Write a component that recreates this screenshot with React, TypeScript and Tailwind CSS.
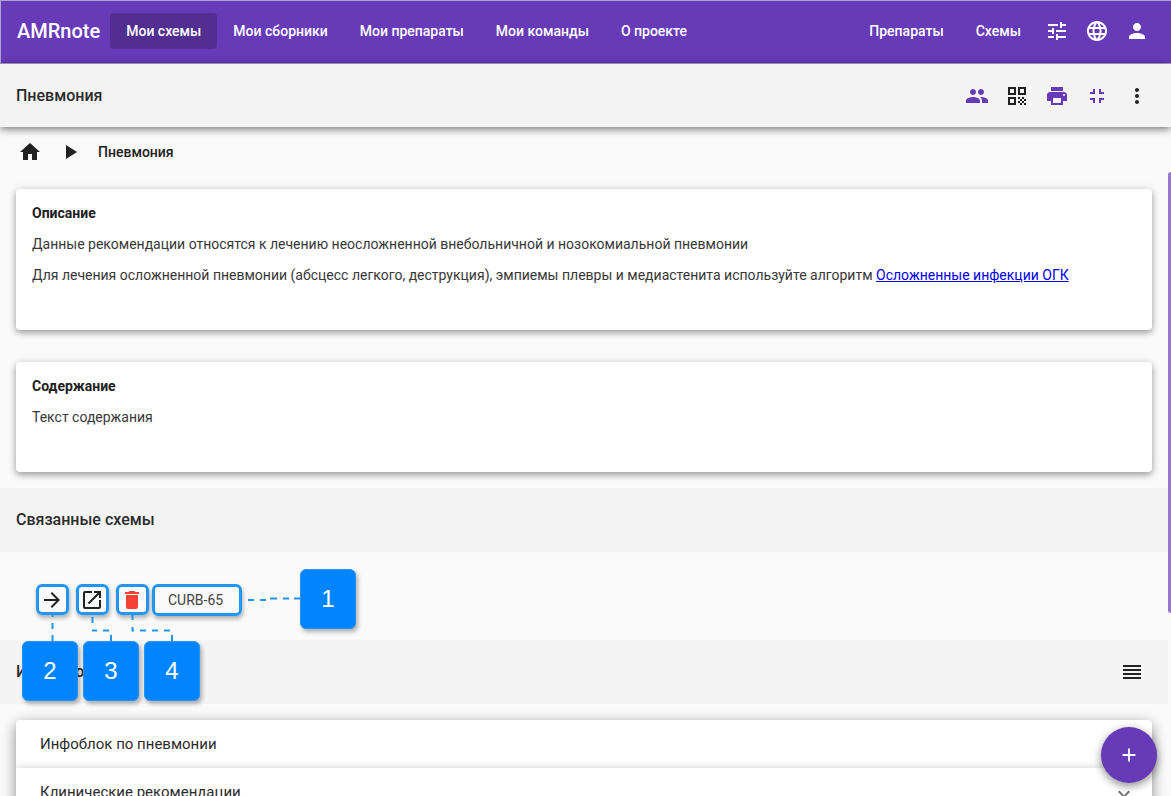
import type { ReactNode } from "react";
import {
  MdAdd,
  MdArrowForward,
  MdDelete,
  MdExpandMore,
  MdFullscreenExit,
  MdHome,
  MdLanguage,
  MdMoreVert,
  MdOpenInNew,
  MdPeople,
  MdPerson,
  MdPlayArrow,
  MdPrint,
  MdQrCode,
  MdReorder,
  MdTune,
} from "react-icons/md";

function IconButton({ label, className = "", children }: { label: string; className?: string; children: ReactNode }) {
  return (
    <button type="button" aria-label={label} className={`flex size-10 shrink-0 items-center justify-center rounded-full ${className}`}>
      {children}
    </button>
  );
}

function NavLink({ active = false, children }: { active?: boolean; children: ReactNode }) {
  return (
    <a
      href="#"
      className={`flex h-9 items-center rounded px-4 text-sm font-medium whitespace-nowrap ${active ? "bg-[#522e91]" : ""}`}
    >
      {children}
    </a>
  );
}

function Card({ title, children }: { title: string; children: ReactNode }) {
  return (
    <section className="mx-4 flex flex-col gap-[11px] rounded bg-white px-4 pt-[14px] pb-[45px] text-sm leading-5 text-[#383838] shadow-[0_3px_6px_rgba(0,0,0,0.3),0_1px_10px_rgba(0,0,0,0.14)]">
      <h2 className="font-bold text-[#212121]">{title}</h2>
      {children}
    </section>
  );
}

function SectionBar({ title, children }: { title: string; children?: ReactNode }) {
  return (
    <div className="flex h-16 shrink-0 items-center justify-between bg-[#f4f4f4] px-4">
      <h2 className="text-base font-medium">{title}</h2>
      {children}
    </div>
  );
}

const frame = "absolute rounded-md border-3 border-[#2196f3] shadow-[1px_3px_4px_rgba(0,0,0,0.3)]";
const marker =
  "absolute flex h-15 w-14 items-center justify-center rounded-md border border-[#2b93f7] bg-[#0084ff] text-2xl text-white shadow-[2px_3px_4px_rgba(0,0,0,0.3)]";

function Callouts() {
  return (
    <div className="pointer-events-none absolute inset-0 font-['Liberation_Sans',sans-serif]">
      <div className={`${frame} top-[584px] left-[36px] h-[31px] w-[33px]`} />
      <div className={`${frame} top-[584px] left-[76px] h-[31px] w-[33px]`} />
      <div className={`${frame} top-[584px] left-[116px] h-[31px] w-[33px]`} />
      <div className={`${frame} top-[584px] left-[152px] h-8 w-[90px]`} />
      <svg className="absolute top-[584px] left-0" width="320" height="60" fill="none" stroke="#2196f3" strokeWidth="2" aria-hidden="true">
        <path d="M248 16H254M260 16H266M270 14.500H277M283 14.500H289M294 14.500H300" />
        <path d="M52.500 31V33M52.500 39V45M52.500 51V57" />
        <path d="M92.500 33V39M92 46.500H97M103 46.500H109M111 51V57" />
        <path d="M132.500 31V36M132.500 43V46.500H134M140 46.500H146M152 46.500H158M164 46.500H170M172 51V57" />
      </svg>
      <div className={`${marker} top-[569px] left-[300px]`}>1</div>
      <div className={`${marker} top-[641px] left-[22px]`}>2</div>
      <div className={`${marker} top-[641px] left-[83px]`}>3</div>
      <div className={`${marker} top-[641px] left-[144px]`}>4</div>
    </div>
  );
}

export default function App() {
  return (
    <div className="relative flex h-screen flex-col overflow-hidden bg-[#fafafa] font-['Roboto',sans-serif] text-[#2b2b2b]">
      <header className="flex h-16 shrink-0 items-center border-y border-l border-[#b39ddb] bg-[#673ab7] pr-[14px] pb-0.5 pl-4 text-white">
        <span className="mr-[10px] text-xl font-medium">AMRnote</span>
        <nav className="flex grow items-center">
          <NavLink active>Мои схемы</NavLink>
          <NavLink>Мои сборники</NavLink>
          <NavLink>Мои препараты</NavLink>
          <NavLink>Мои команды</NavLink>
          <NavLink>О проекте</NavLink>
        </nav>
        <nav className="flex items-center">
          <NavLink>Препараты</NavLink>
          <NavLink>Схемы</NavLink>
        </nav>
        <IconButton label="Настройки"><MdTune size={24} /></IconButton>
        <IconButton label="Язык"><MdLanguage size={24} /></IconButton>
        <IconButton label="Профиль"><MdPerson size={24} /></IconButton>
      </header>

      <div className="z-10 flex h-[63px] shrink-0 items-center bg-[#f4f4f4] pr-[14px] pl-4 shadow-[0_2px_8px_rgba(0,0,0,0.55)]">
        <h1 className="grow text-base font-medium">Пневмония</h1>
        <IconButton label="Участники" className="text-[#673ab7]"><MdPeople size={24} /></IconButton>
        <IconButton label="QR-код" className="text-[#212121]"><MdQrCode size={24} /></IconButton>
        <IconButton label="Печать" className="text-[#673ab7]"><MdPrint size={24} /></IconButton>
        <IconButton label="Свернуть" className="text-[#673ab7]"><MdFullscreenExit size={24} /></IconButton>
        <IconButton label="Ещё" className="text-[#212121]"><MdMoreVert size={24} /></IconButton>
      </div>

      <div className="flex min-h-0 grow">
        <main className="flex min-w-0 grow flex-col overflow-hidden">
          <nav className="mb-4 flex h-[46px] shrink-0 items-center pt-1 pl-[10px] text-[#212121]">
            <IconButton label="Главная"><MdHome size={24} /></IconButton>
            <span className="flex size-10 items-center justify-center"><MdPlayArrow size={24} /></span>
            <a href="#" className="ml-2 text-sm font-medium">Пневмония</a>
          </nav>

          <div className="flex flex-col gap-8 pb-4">
            <Card title="Описание">
              <p>Данные рекомендации относятся к лечению неосложненной внебольничной и нозокомиальной пневмонии</p>
              <p>
                Для лечения осложненной пневмонии (абсцесс легкого, деструкция), эмпиемы плевры и медиастенита используйте алгоритм{" "}
                <a href="#" className="text-[#0000ee] underline">Осложненные инфекции ОГК</a>
              </p>
            </Card>
            <Card title="Содержание">
              <p>Текст содержания</p>
            </Card>
          </div>

          <SectionBar title="Связанные схемы" />
          <div className="flex h-22 shrink-0 items-center pt-2 pl-8">
            <IconButton label="Перейти" className="text-[#212121]"><MdArrowForward size={24} /></IconButton>
            <IconButton label="Открыть в новом окне" className="text-[#212121]"><MdOpenInNew size={24} /></IconButton>
            <IconButton label="Удалить" className="text-[#f44336]"><MdDelete size={24} /></IconButton>
            <button type="button" className="h-9 px-4 text-sm text-[#444444]">CURB-65</button>
          </div>

          <SectionBar title="Инфоблоки">
            <IconButton label="Изменить порядок" className="text-[#212121]"><MdReorder size={24} /></IconButton>
          </SectionBar>
          <div className="mx-4 mt-4 shrink-0 rounded bg-white shadow-[0_4px_14px_rgba(0,0,0,0.45)]">
            <button type="button" className="flex h-12 w-full items-center justify-between px-6 text-[15px]">
              Инфоблок по пневмонии
            </button>
            <button type="button" className="flex h-12 w-full items-center justify-between pr-4 pl-6 text-[15px] shadow-[0_-1px_8px_rgba(0,0,0,0.16)] [clip-path:inset(-12px_0_0_0)]">
              Клинические рекомендации
              <MdExpandMore size={24} className="mt-1 text-[#757575]" />
            </button>
          </div>
        </main>
        <div className="w-[3px] shrink-0 pt-[45px]">
          <div className="h-[441px] rounded-l-sm bg-[#9575cd]" />
        </div>
      </div>

      <Callouts />

      <button
        type="button"
        aria-label="Добавить"
        className="absolute right-[14px] bottom-[13px] flex size-14 items-center justify-center rounded-full bg-[#673ab7] text-white shadow-[0_3px_8px_rgba(0,0,0,0.45)]"
      >
        <MdAdd size={22} />
      </button>
    </div>
  );
}
